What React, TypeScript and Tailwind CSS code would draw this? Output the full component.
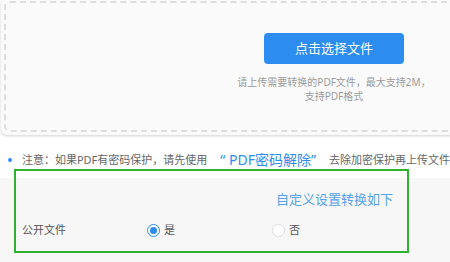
export default function App() {
  return (
    <div
      className="relative w-[450px] h-[262px] overflow-hidden bg-white"
      style={{ fontFamily: '"Noto Sans", "Noto Sans CJK SC", sans-serif' }}
    >
      {/* upload card */}
      <div className="ml-[1px] mt-[-2px] w-[666px] rounded-md bg-[#fafafa] p-[3px] shadow-[0_1px_3px_rgba(0,0,0,0.18)]">
        <div className="h-[131px] rounded-md border-2 border-dashed border-[#dedede] pt-[30px] flex flex-col items-center">
          <button className="w-[140px] h-[31px] rounded bg-[#2d8cf0] text-white text-[13px] leading-none">
            点击选择文件
          </button>
          <p className="mt-[11px] text-center text-[10px] leading-[14px] text-[#9a9a9a]">
            请上传需要转换的PDF文件，最大支持2M，
            <br />
            支持PDF格式
          </p>
        </div>
      </div>

      {/* note */}
      <div className="mt-[17px] flex items-center whitespace-nowrap pl-[8px] text-[11px] leading-[16px] text-[#666]">
        <span className="mr-[10px] h-[4px] w-[4px] rounded-full bg-[#2d8cf0]" />
        <span>注意：如果PDF有密码保护，请先使用</span>
        <span className="mx-[13px] text-[14px] leading-[16px] text-[#2d8cf0]">“ PDF密码解除”</span>
        <span>去除加密保护再上传文件</span>
      </div>

      {/* settings */}
      <div className="mt-[10px] h-[100px] bg-[#f7f7f7] pt-[12px]">
        <div className="w-[393px] text-right text-[13px] leading-[18px] text-[#55a3ec]">自定义设置转换如下</div>
        <div className="mt-[14px] grid grid-cols-[125px_125px_1fr] items-center pl-[22px] text-[11px] leading-[16px] text-[#555]">
          <span>公开文件</span>
          <label className="flex items-center gap-[4px]">
            <span className="flex h-[13px] w-[13px] items-center justify-center rounded-full border border-[#2d8cf0] bg-white">
              <span className="h-[7px] w-[7px] rounded-full bg-[#2d8cf0]" />
            </span>
            <span>是</span>
          </label>
          <label className="flex items-center gap-[4px]">
            <span className="h-[13px] w-[13px] rounded-full border border-[#dcdee2] bg-white" />
            <span>否</span>
          </label>
        </div>
      </div>

      {/* highlight frame */}
      <div className="absolute left-[14px] top-[169px] h-[84px] w-[395px] border-2 border-[#2fb22f]" />
    </div>
  );
}
